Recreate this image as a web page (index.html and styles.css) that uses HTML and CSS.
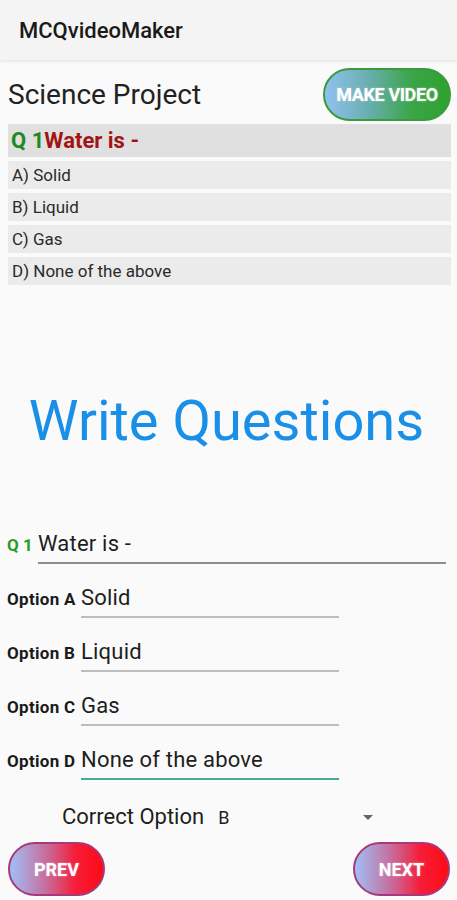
FILE: index.html
```html
<!DOCTYPE html>
<html lang="en">
<head>
  <meta charset="UTF-8" />
  <title>MCQvideoMaker</title>
  <meta name="viewport" content="width=device-width, initial-scale=1.0" />
  <link rel="stylesheet" href="styles.css">
</head>
<body>

  <div class="appbar">MCQvideoMaker</div>

  <div class="content">
    <div class="top-row">
      <div class="project">Science Project</div>
      <button class="pill green">MAKE VIDEO</button>
    </div>

    <div class="q-head"><span class="q-num">Q 1</span><span class="q-text">Water is -</span></div>
    <div class="opt">A) Solid</div>
    <div class="opt">B) Liquid</div>
    <div class="opt">C) Gas</div>
    <div class="opt">D) None of the above</div>

    <h1 class="big-title">Write Questions</h1>

    <div class="form">
      <div class="field">
        <span class="q-label">Q 1</span>
        <div class="input wide">Water is -</div>
      </div>
      <div class="field">
        <span class="opt-label">Option A</span>
        <div class="input">Solid</div>
      </div>
      <div class="field">
        <span class="opt-label">Option B</span>
        <div class="input">Liquid</div>
      </div>
      <div class="field">
        <span class="opt-label">Option C</span>
        <div class="input">Gas</div>
      </div>
      <div class="field">
        <span class="opt-label">Option D</span>
        <div class="input focused">None of the above</div>
      </div>
    </div>

    <div class="spinner">
      <span class="spin-label">Correct Option</span>
      <span class="spin-value">B</span>
      <span class="spin-arrow"></span>
    </div>

    <div class="nav">
      <button class="pill red">PREV</button>
      <button class="pill red">NEXT</button>
    </div>
  </div>

</body>
</html>
```

FILE: styles.css
```css
* { box-sizing: border-box; margin: 0; padding: 0; }
body {
  font-family: Roboto, "Liberation Sans", sans-serif;
  background: #fafafa;
  color: #1e1e1e;
  width: 457px;
  height: 900px;
  overflow: hidden;
}
.appbar {
  height: 60px;
  background: #f4f4f4;
  padding-left: 19px;
  display: flex;
  align-items: center;
  font-size: 22px;
  font-weight: 500;
  color: #1a1a1a;
  box-shadow: 0 2px 3px rgba(0,0,0,0.07);
}
.content {
  padding: 0 6px 0 8px;
}
.top-row {
  display: flex;
  justify-content: space-between;
  align-items: center;
  margin-top: 8px;
}
.project {
  font-size: 28px;
  color: #222;
}
.pill {
  font-family: Roboto, "Liberation Sans", sans-serif;
  font-weight: 700;
  color: #fff;
  border-radius: 28px;
  cursor: pointer;
  text-shadow: 0 0 2px rgba(255,255,255,0.5);
}
.pill.green {
  width: 128px;
  height: 53px;
  font-size: 18px;
  letter-spacing: -0.4px;
  border: 2px solid #3a9a3e;
  background: linear-gradient(to right, #8fc2f0 0%, #6aaeb0 35%, #3aa548 70%, #2ea22e 100%);
}
.pill.red {
  width: 97px;
  height: 54px;
  font-size: 18px;
  border: 2px solid #a8387a;
  background: linear-gradient(to right, #9fc0f6 0%, #c86a9a 40%, #f51e3a 70%, #ff0a14 100%);
}
.q-head {
  margin-top: 3px;
  height: 33px;
  background: #e0e0e0;
  padding-left: 3px;
  display: flex;
  align-items: center;
  font-size: 22px;
  font-weight: 700;
}
.q-num { color: #1f8a1f; }
.q-text { color: #a31515; }
.opt {
  margin-top: 4px;
  height: 28px;
  background: #ebebeb;
  padding-left: 4px;
  display: flex;
  align-items: center;
  font-size: 17px;
  color: #2a2a2a;
}
.big-title {
  margin: 104px 6px 0 0;
  text-align: center;
  font-size: 56px;
  line-height: 64px;
  font-weight: 400;
  color: #1a8fe8;
}
.form {
  margin-top: 78px;
}
.field {
  display: flex;
  align-items: baseline;
  margin-top: 21px;
}
.field:first-child { margin-top: 0; }
.q-label {
  width: 31px;
  font-size: 17px;
  font-weight: 700;
  color: #2a9a2a;
  margin-left: -1px;
}
.opt-label {
  width: 74px;
  font-size: 17px;
  font-weight: 700;
  letter-spacing: 0.3px;
  color: #1a1a1a;
  margin-left: -1px;
}
.input {
  width: 258px;
  font-size: 22px;
  line-height: 26px;
  letter-spacing: 0.2px;
  padding: 0 0 5px 0;
  border-bottom: 2px solid #bdbdbd;
  color: #1e1e1e;
}
.input.wide {
  flex: 1;
  width: auto;
  margin-right: 5px;
  border-bottom-color: #8c8c8c;
}
.input.focused {
  border-bottom-color: #4aa898;
}
.spinner {
  display: flex;
  align-items: baseline;
  margin: 24px 0 0 54px;
  width: 311px;
  height: 26px;
  font-size: 22px;
  line-height: 26px;
  color: #1e1e1e;
}
.spin-value {
  font-size: 18px;
  margin-left: 14px;
  flex: 1;
}
.spin-arrow {
  width: 0;
  height: 0;
  border-left: 5px solid transparent;
  border-right: 5px solid transparent;
  border-top: 5px solid #666;
  align-self: center;
}
.nav {
  display: flex;
  justify-content: space-between;
  margin-top: 12px;
  padding-right: 1px;
}
```
